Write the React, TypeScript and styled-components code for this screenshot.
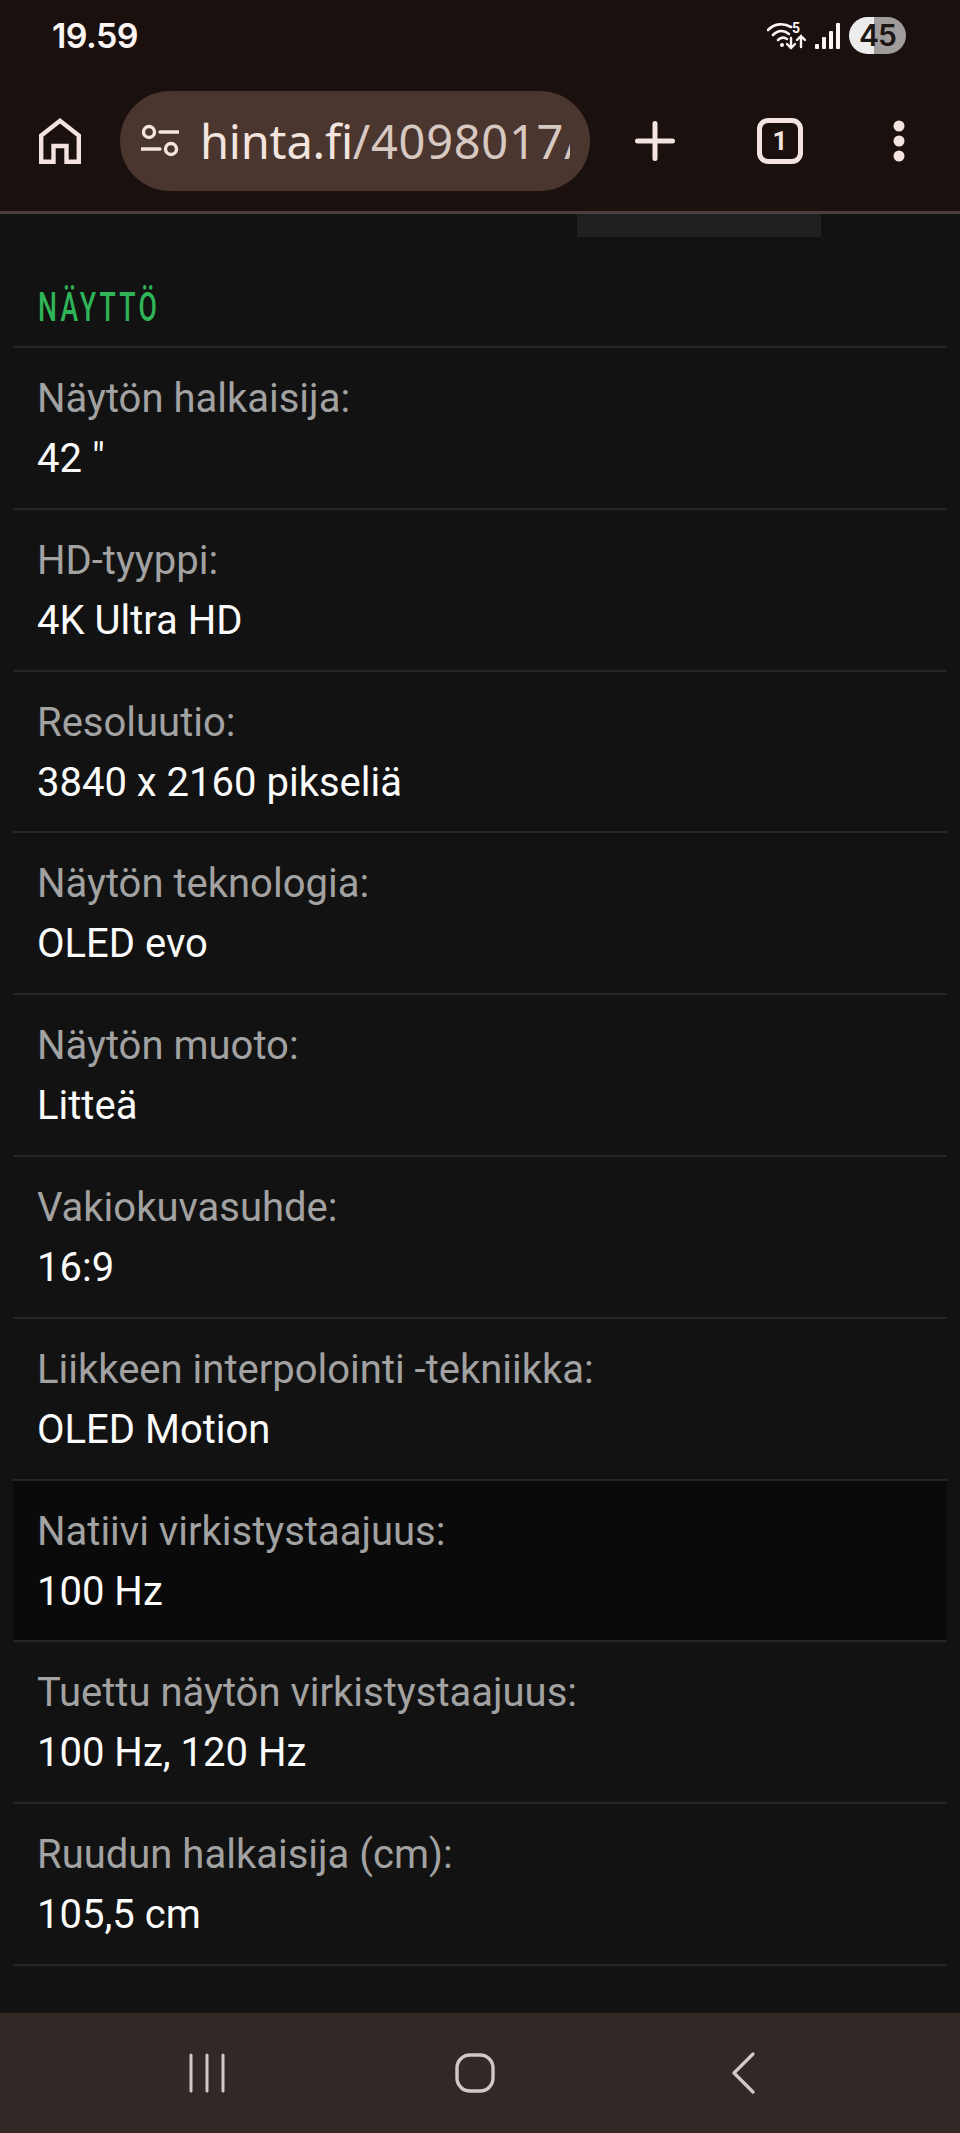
import { createGlobalStyle } from "styled-components";
import styled from "styled-components";

const GlobalStyle = createGlobalStyle`
  html, body {
    margin: 0;
    padding: 0;
    background: #121212;
  }
`;

const Screen = styled.div`
  width: 960px;
  height: 2133px;
  display: flex;
  flex-direction: column;
  overflow: hidden;
  background: #121212;
  font-family: Roboto, "Liberation Sans", sans-serif;
`;

const Header = styled.header`
  height: 211px;
  background: #1a100e;
  border-bottom: 3px solid #4c3e3a;
  display: flex;
  flex-direction: column;
`;

const StatusBar = styled.div`
  height: 91px;
  padding: 17px 54px 0 52px;
  box-sizing: border-box;
  display: flex;
  align-items: flex-start;
  justify-content: space-between;
`;

const Clock = styled.span`
  font-family: Inter, Roboto, sans-serif;
  font-size: 34px;
  font-weight: 600;
  line-height: 38px;
  letter-spacing: -0.6px;
  color: #fbf5f3;
`;

const StatusIcons = styled.div`
  display: flex;
  align-items: center;
  gap: 8px;
`;

const Battery = styled.span`
  width: 57px;
  height: 37px;
  border-radius: 19px;
  background: linear-gradient(90deg, #ececec 0 44%, #a09c9b 44% 100%);
  color: #1c1615;
  font-family: Inter, Roboto, sans-serif;
  font-size: 30px;
  font-weight: 600;
  letter-spacing: -1px;
  line-height: 37px;
  text-align: center;
`;

const Toolbar = styled.div`
  height: 100px;
  display: flex;
  align-items: center;
`;

const ToolCell = styled.div<{ $width: number }>`
  width: ${(p) => p.$width}px;
  flex: none;
  display: flex;
  align-items: center;
  justify-content: center;
`;

const UrlPill = styled.div`
  width: 470px;
  height: 100px;
  flex: none;
  box-sizing: border-box;
  padding: 0 20px 0 21px;
  border-radius: 50px;
  background: #4b362f;
  display: flex;
  align-items: center;
  gap: 21px;
`;

const UrlClip = styled.div`
  flex: 1;
  overflow: hidden;
  white-space: nowrap;
  font-family: "Noto Sans", Roboto, sans-serif;
  font-size: 47px;
  letter-spacing: -0.2px;
  line-height: 60px;
  color: #d8c8c2;
`;

const UrlHost = styled.span`
  color: #f3e4df;
`;

const UrlPath = styled.span`
  letter-spacing: 0.7px;
`;

const TabCount = styled.div`
  width: 46px;
  height: 46px;
  box-sizing: border-box;
  border: 5px solid #f3e4df;
  border-radius: 11px;
  color: #f3e4df;
  font-family: Roboto, sans-serif;
  font-size: 26px;
  font-weight: 700;
  line-height: 36px;
  text-align: center;
`;

const TopStrip = styled.div`
  width: 244px;
  height: 23px;
  margin-left: 577px;
  background: #1f2021;
`;

const Section = styled.section`
  padding: 0 13px;
  flex: 1;
`;

const SectionTitle = styled.h2`
  margin: 0;
  height: 109px;
  box-sizing: border-box;
  padding: 50px 0 0 25px;
  font-family: Roboto, "Liberation Sans", sans-serif;
  font-size: 41px;
  font-weight: 500;
  line-height: 40px;
  letter-spacing: 5px;
  color: #2fb457;
  transform: scaleX(0.65);
  transform-origin: 25px 0;
`;

const SpecRow = styled.div<{ $active?: boolean }>`
  height: 161.8px;
  box-sizing: border-box;
  border-top: 2px solid #262626;
  padding: 21px 24px 0;
  background: ${(p) => (p.$active ? "#0a0a0a" : "transparent")};
  &:last-child {
    border-bottom: 2px solid #262626;
    height: 163.8px;
  }
`;

const SpecLabel = styled.div`
  font-size: 40px;
  line-height: 60px;
  color: #a2a2a2;
`;

const SpecValue = styled.div`
  font-size: 40px;
  line-height: 60px;
  color: #fbfbfb;
`;

const NavBar = styled.nav`
  height: 120px;
  flex: none;
  background: #322927;
  padding-left: 73px;
  display: flex;
  align-items: center;
`;

const NavCell = styled.div`
  width: 268px;
  display: flex;
  justify-content: center;
`;

const specs = [
  ["Näytön halkaisija:", '42 "'],
  ["HD-tyyppi:", "4K Ultra HD"],
  ["Resoluutio:", "3840 x 2160 pikseliä"],
  ["Näytön teknologia:", "OLED evo"],
  ["Näytön muoto:", "Litteä"],
  ["Vakiokuvasuhde:", "16:9"],
  ["Liikkeen interpolointi -tekniikka:", "OLED Motion"],
  ["Natiivi virkistystaajuus:", "100 Hz"],
  ["Tuettu näytön virkistystaajuus:", "100 Hz, 120 Hz"],
  ["Ruudun halkaisija (cm):", "105,5 cm"],
];

const WifiIcon = () => (
  <svg width="40" height="30" viewBox="0 0 40 30" fill="none" stroke="#fbf5f3" strokeLinecap="round">
    <path d="M1 9C8 2 17 2 24 6" strokeWidth="2.6" />
    <path d="M6 14c5-5 11-5 16-1" strokeWidth="2.6" />
    <path d="M11 19c3-3 6-3 9-1" strokeWidth="2.6" />
    <circle cx="15" cy="24" r="2" fill="#fbf5f3" stroke="none" />
    <text x="25" y="12" fill="#fbf5f3" stroke="none" fontFamily="Roboto" fontWeight="700" fontSize="14">5</text>
    <path d="M24 17v10M20 23l4 4 4-4M34 26V15M30 19l4-4 4 4" strokeWidth="2.4" />
  </svg>
);

const SignalIcon = () => (
  <svg width="26" height="28" viewBox="0 0 26 28" fill="#fbf5f3">
    <rect x="0" y="22" width="4" height="5" rx="1" />
    <rect x="7" y="15" width="4" height="12" rx="1" />
    <rect x="14" y="9" width="4" height="18" rx="1" />
    <rect x="21" y="1" width="4" height="26" rx="1" />
  </svg>
);

const HomeIcon = () => (
  <svg width="42" height="46" viewBox="0 0 42 46" fill="none" stroke="#f3e4df" strokeWidth="4.4">
    <path d="M2.2 43.8V17.5L21 2.8l18.8 14.7v26.3H27.5V28h-13v15.8z" />
  </svg>
);

const TuneIcon = () => (
  <svg width="38" height="34" viewBox="0 0 38 34" fill="none" stroke="#f3e4df" strokeWidth="3.4">
    <circle cx="8" cy="8" r="5.5" />
    <circle cx="30" cy="25" r="5.5" />
    <path d="M19 8h18M1 25h18" strokeLinecap="round" />
  </svg>
);

const PlusIcon = () => (
  <svg width="40" height="40" viewBox="0 0 40 40" fill="none" stroke="#f3e4df" strokeWidth="5" strokeLinecap="round">
    <path d="M20 2.5v35M2.5 20h35" />
  </svg>
);

const DotsIcon = () => (
  <svg width="12" height="42" viewBox="0 0 12 42" fill="#f3e4df">
    <circle cx="6" cy="6" r="5.5" />
    <circle cx="6" cy="21" r="5.5" />
    <circle cx="6" cy="36" r="5.5" />
  </svg>
);

const RecentsIcon = () => (
  <svg width="36" height="40" viewBox="0 0 36 40" stroke="#cfcac8" strokeWidth="3" strokeLinecap="round">
    <path d="M2 2v36M18 2v36M34 2v36" />
  </svg>
);

const HomeNavIcon = () => (
  <svg width="40" height="40" viewBox="0 0 40 40" fill="none" stroke="#cfcac8" strokeWidth="3.4">
    <rect x="2" y="2" width="36" height="36" rx="13" />
  </svg>
);

const BackIcon = () => (
  <svg width="24" height="42" viewBox="0 0 24 42" fill="none" stroke="#cfcac8" strokeWidth="3.2" strokeLinecap="round" strokeLinejoin="round">
    <path d="M22 2 3 21l19 19" />
  </svg>
);

const App = () => (
  <>
    <GlobalStyle />
    <Screen>
      <Header>
        <StatusBar>
          <Clock>19.59</Clock>
          <StatusIcons>
            <WifiIcon />
            <SignalIcon />
            <Battery>45</Battery>
          </StatusIcons>
        </StatusBar>
        <Toolbar>
          <ToolCell $width={120}>
            <HomeIcon />
          </ToolCell>
          <UrlPill>
            <TuneIcon />
            <UrlClip>
              <UrlHost>hinta.fi</UrlHost>
              <UrlPath>/4098017/</UrlPath>
            </UrlClip>
          </UrlPill>
          <ToolCell $width={130}>
            <PlusIcon />
          </ToolCell>
          <ToolCell $width={120}>
            <TabCount>1</TabCount>
          </ToolCell>
          <ToolCell $width={118}>
            <DotsIcon />
          </ToolCell>
        </Toolbar>
      </Header>
      <TopStrip />
      <Section>
        <SectionTitle>NÄYTTÖ</SectionTitle>
        {specs.map(([label, value]) => (
          <SpecRow key={label} $active={label.startsWith("Natiivi")}>
            <SpecLabel>{label}</SpecLabel>
            <SpecValue>{value}</SpecValue>
          </SpecRow>
        ))}
      </Section>
      <NavBar>
        <NavCell>
          <RecentsIcon />
        </NavCell>
        <NavCell>
          <HomeNavIcon />
        </NavCell>
        <NavCell>
          <BackIcon />
        </NavCell>
      </NavBar>
    </Screen>
  </>
);

export default App;
